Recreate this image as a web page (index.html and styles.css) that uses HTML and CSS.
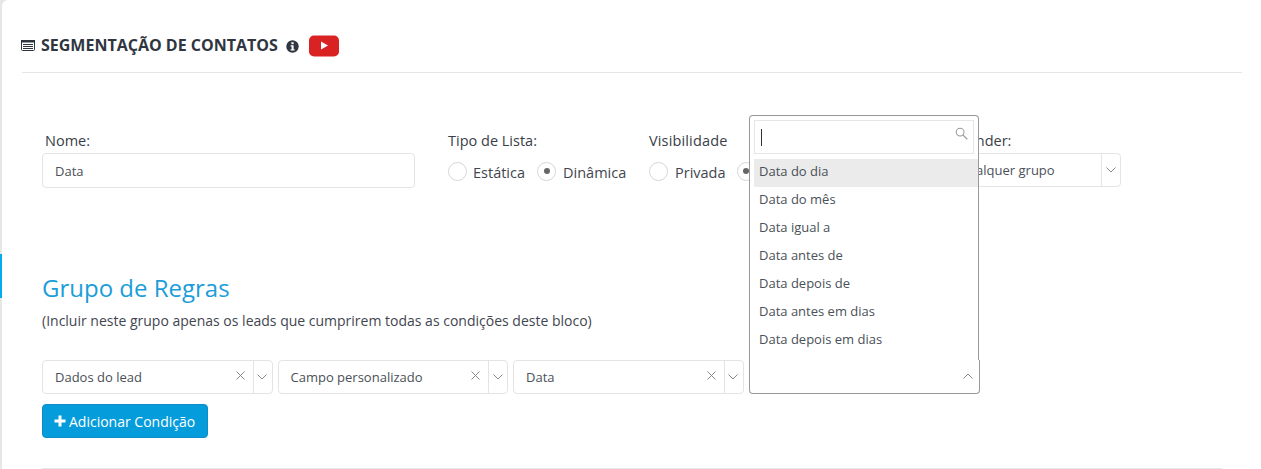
FILE: index.html
```html
<!DOCTYPE html>
<html lang="pt-BR">
<head>
  <meta charset="UTF-8" />
  <title>Segmentação de Contatos</title>
  <link rel="stylesheet" href="styles.css">
</head>
<body>
  <span class="rail-mark"></span>
  <main class="painel">
    <header class="titulo">
      <svg class="ico-lista" width="14" height="11" viewBox="0 0 14 11">
        <rect x="0.5" y="0.5" width="13" height="10" rx="1" fill="#fff" stroke="#2f3640"/>
        <rect x="0" y="0" width="14" height="2.5" fill="#2f3640"/>
        <path d="M2 4.5h10M2 6.5h10M2 8.5h10" stroke="#2f3640" stroke-width="1"/>
      </svg>
      <h1>SEGMENTAÇÃO DE CONTATOS</h1>
      <svg class="ico-info" width="13" height="13" viewBox="0 0 13 13">
        <circle cx="6.5" cy="6.5" r="6.2" fill="#2f3640"/>
        <rect x="5.4" y="2.2" width="2.2" height="2" fill="#fff"/>
        <path d="M4.6 5.3h3v4h1v1.3H4.6V9.300h1V6.600h-1z" fill="#fff"/>
      </svg>
      <svg class="ico-yt" width="30" height="22" viewBox="0 0 30 22">
        <rect width="30" height="21" y="0.500" rx="5" fill="#d92323"/>
        <path d="M12 6.500l7 4-7 4z" fill="#fff"/>
      </svg>
    </header>

    <section class="linha-topo">
      <div class="campo campo-nome">
        <label>Nome:</label>
        <div class="caixa"><span>Data</span></div>
      </div>
      <div class="campo campo-tipo">
        <label>Tipo de Lista:</label>
        <div class="radios">
          <span class="radio"></span><span class="radio-txt estatica">Estática</span>
          <span class="radio marcado"></span><span class="radio-txt">Dinâmica</span>
        </div>
      </div>
      <div class="campo campo-vis">
        <label>Visibilidade</label>
        <div class="radios">
          <span class="radio"></span><span class="radio-txt">Privada</span>
          <span class="radio marcado"></span>
        </div>
      </div>
      <div class="campo campo-grupo">
        <label>Vender:</label>
        <div class="caixa seletor">
          <span class="sel-txt">Qualquer grupo</span>
          <span class="seta"><svg width="10" height="6" viewBox="0 0 10 6"><path d="M0.500 0.500L5 5l4.500-4.500" fill="none" stroke="#888"/></svg></span>
        </div>
      </div>
    </section>

    <section class="regras">
      <h2>Grupo de Regras</h2>
      <p>(Incluir neste grupo apenas os leads que cumprirem todas as condições deste bloco)</p>
      <div class="condicoes">
        <div class="caixa seletor cond">
          <span class="sel-txt">Dados do lead</span>
          <svg class="limpar" width="9" height="9" viewBox="0 0 9 9"><path d="M0.500 0.500l8 8M8.500 0.500l-8 8" stroke="#888" fill="none"/></svg>
          <span class="seta"><svg width="10" height="6" viewBox="0 0 10 6"><path d="M0.500 0.500L5 5l4.500-4.500" fill="none" stroke="#888"/></svg></span>
        </div>
        <div class="caixa seletor cond">
          <span class="sel-txt">Campo personalizado</span>
          <svg class="limpar" width="9" height="9" viewBox="0 0 9 9"><path d="M0.500 0.500l8 8M8.500 0.500l-8 8" stroke="#888" fill="none"/></svg>
          <span class="seta"><svg width="10" height="6" viewBox="0 0 10 6"><path d="M0.500 0.500L5 5l4.500-4.500" fill="none" stroke="#888"/></svg></span>
        </div>
        <div class="caixa seletor cond">
          <span class="sel-txt">Data</span>
          <svg class="limpar" width="9" height="9" viewBox="0 0 9 9"><path d="M0.500 0.500l8 8M8.500 0.500l-8 8" stroke="#888" fill="none"/></svg>
          <span class="seta"><svg width="10" height="6" viewBox="0 0 10 6"><path d="M0.500 0.500L5 5l4.500-4.500" fill="none" stroke="#888"/></svg></span>
        </div>
      </div>
      <button class="btn-add"><svg width="12" height="12" viewBox="0 0 12 12"><path d="M4.500 0.500h3v4h4v3h-4v4h-3v-4h-4v-3h4z" fill="#fff"/></svg>Adicionar Condição</button>
    </section>
    <hr class="fim">
  </main>

  <div class="dropdown">
    <div class="lista">
      <div class="busca">
        <span class="cursor"></span>
        <svg width="13" height="13" viewBox="0 0 14 14"><circle cx="5.500" cy="5.500" r="4.200" fill="none" stroke="#999" stroke-width="1.100"/><path d="M8.700 8.700l4.500 4.500" stroke="#999" stroke-width="1.300"/></svg>
      </div>
      <ul>
        <li class="ativo">Data do dia</li>
        <li>Data do mês</li>
        <li>Data igual a</li>
        <li>Data antes de</li>
        <li>Data depois de</li>
        <li>Data antes em dias</li>
        <li>Data depois em dias</li>
      </ul>
    </div>
    <div class="select-aberto">
      <svg width="10" height="6" viewBox="0 0 10 6"><path d="M0.500 5.500L5 1l4.500 4.500" fill="none" stroke="#888"/></svg>
    </div>
  </div>
</body>
</html>
```

FILE: styles.css
```css
* {
  box-sizing: border-box;
}

html, body {
  height: 469px;
  overflow: hidden;
}

body {
  margin: 0;
  font-family: "Open Sans", sans-serif;
  font-size: 13px;
  color: #3f4650;
  background: #e6e6e6;
}

.rail-mark {
  position: absolute;
  left: 0;
  top: 254px;
  width: 2px;
  height: 44px;
  background: #00aeef;
}

.painel {
  margin-left: 2px;
  height: 469px;
  padding: 0 19px 0 20px;
  background: #fff;
  border-top-left-radius: 6px;
}

.titulo {
  height: 73px;
  padding-top: 35px;
  display: flex;
  align-items: flex-start;
  border-bottom: 1px solid #e6e6e6;
}

.titulo h1 {
  margin: 0 0 0 6px;
  font-size: 16px;
  line-height: 20px;
  font-weight: 700;
  color: #2f3640;
}

.ico-lista {
  margin: 5px 0 0 -1px;
}

.ico-info {
  margin: 5px 0 0 8px;
}

.ico-yt {
  margin: 0 0 0 10px;
}

.linha-topo {
  display: flex;
  padding: 58px 0 0 20px;
}

.campo label {
  display: block;
  font-size: 14.5px;
  line-height: 20px;
  color: #3a4048;
}

.campo-nome {
  width: 406px;
}

.campo-nome label {
  padding-left: 3px;
  margin-bottom: 2px;
}

.campo-tipo {
  width: 201px;
}

.campo-vis {
  width: 296px;
}

.campo-vis label {
  letter-spacing: 0.15px;
}

.campo-grupo label {
  padding-left: 14px;
  margin-bottom: 2px;
}

.caixa {
  height: 35px;
  width: 373px;
  border: 1px solid #e4e4e4;
  border-radius: 4px;
  background: #fff;
  display: flex;
  align-items: center;
  padding-left: 12px;
  color: #4a5058;
}

.radios {
  display: flex;
  align-items: center;
  height: 22px;
  margin-top: 9px;
  font-size: 14.5px;
}

.radio {
  width: 19px;
  height: 19px;
  border: 1px solid #d6d6d6;
  border-radius: 50%;
  display: flex;
  align-items: center;
  justify-content: center;
  flex: none;
}

.radio.marcado::after {
  content: "";
  width: 6px;
  height: 6px;
  border-radius: 50%;
  background: #666;
}

.radio-txt {
  margin: 2px 11px 0 7px;
}

.radio-txt.estatica {
  margin: 2px 12px 0 6px;
}

.seletor {
  padding-left: 0;
  padding-right: 0;
}

.sel-txt {
  padding-left: 12px;
  flex: 1;
  white-space: nowrap;
}

.campo-grupo .caixa {
  width: 176px;
  height: 34px;
}

.seta {
  width: 19px;
  height: 100%;
  padding: 0 1px 1px 0;
  border-left: 1px solid #e4e4e4;
  display: flex;
  align-items: center;
  justify-content: center;
  flex: none;
}

.limpar {
  margin: -3px 8px 0 0;
  flex: none;
}

.regras {
  padding: 83px 0 0 20px;
}

.regras h2 {
  margin: 0;
  font-size: 24px;
  line-height: 33px;
  font-weight: 400;
  color: #1b9dd9;
}

.regras p {
  margin: 7px 0 0;
  font-size: 14px;
  line-height: 20px;
  color: #3f4650;
}

.condicoes {
  display: flex;
  gap: 5px;
  margin-top: 29px;
}

.cond {
  width: 230.5px;
  height: 34px;
}

.btn-add {
  display: flex;
  align-items: center;
  gap: 3px;
  margin-top: 10px;
  height: 34px;
  width: 166px;
  padding: 0 0 0 11px;
  border: 1px solid #0f8cc7;
  border-radius: 4px;
  background: #049cdb;
  color: #fff;
  font: 14px "Open Sans", sans-serif;
}

.fim {
  margin: 30px 0 0 20px;
  width: 1180px;
  border: 0;
  border-top: 1px solid #e6e6e6;
}

.dropdown {
  position: absolute;
  left: 749px;
  top: 115px;
  width: 231px;
}

.lista {
  width: 230px;
  height: 245px;
  border: 1px solid #999;
  border-bottom: 0;
  border-radius: 4px 4px 0 0;
  background: #fff;
  padding: 4px 0 0 4px;
}

.select-aberto {
  height: 34px;
  border: 1px solid #999;
  border-top: 0;
  border-radius: 0 0 4px 4px;
  background: #fff;
  display: flex;
  justify-content: flex-end;
  padding: 13px 6px 0 0;
}

.busca {
  width: 220px;
  height: 34px;
  border: 1px solid #e6e6e6;
  display: flex;
  justify-content: space-between;
  padding: 6px 5px 0 6px;
}

.cursor {
  width: 1px;
  height: 17px;
  margin-top: 2px;
  background: #333;
}

.dropdown ul {
  list-style: none;
  margin: 5px 0 0;
  padding: 0;
}

.dropdown li {
  height: 28px;
  line-height: 24px;
  padding-left: 5px;
  color: #4a5058;
}

.dropdown li.ativo {
  background: #ebebeb;
}
```
